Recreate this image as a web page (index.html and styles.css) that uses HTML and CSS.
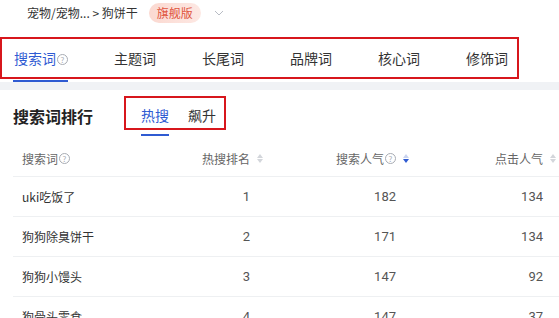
FILE: index.html
```html
<!DOCTYPE html>
<html lang="zh-CN">
  <head>
    <meta charset="UTF-8" />
    <title>搜索词排行</title>
    <link rel="stylesheet" href="styles.css">
  </head>
  <body>
    <div class="crumbs">
      <span class="crumb-text">宠物/宠物... &gt; 狗饼干</span>
      <span class="badge">旗舰版</span>
      <svg class="chevron" width="10" height="6" viewBox="0 0 10 6"><path d="M1 1l4 4 4-4" fill="none" stroke="#b8bcc4" stroke-width="1"/></svg>
    </div>

    <div class="tabbar">
      <div class="tabs">
        <div class="tab active">搜索词<span class="help">?</span></div>
        <div class="tab">主题词</div>
        <div class="tab">长尾词</div>
        <div class="tab">品牌词</div>
        <div class="tab">核心词</div>
        <div class="tab">修饰词</div>
      </div>
    </div>
    <div class="band"></div>

    <div class="rank-head">
      <div class="rank-title">搜索词排行</div>
      <div class="subtabs">
        <div class="subtab active">热搜</div>
        <div class="subtab">飙升</div>
      </div>
    </div>

    <div class="table">
      <div class="row head">
        <div class="cell name">搜索词<span class="help">?</span></div>
        <div class="cell num">热搜排名<span class="sorter"><i class="up"></i><i class="down"></i></span></div>
        <div class="cell num">搜索人气<span class="help">?</span><span class="sorter on"><i class="up"></i><i class="down"></i></span></div>
        <div class="cell num">点击人气<span class="sorter"><i class="up"></i><i class="down"></i></span></div>
      </div>
      <div class="row">
        <div class="cell name">uki吃饭了</div>
        <div class="cell num">1</div>
        <div class="cell num">182</div>
        <div class="cell num">134</div>
      </div>
      <div class="row">
        <div class="cell name">狗狗除臭饼干</div>
        <div class="cell num">2</div>
        <div class="cell num">171</div>
        <div class="cell num">134</div>
      </div>
      <div class="row">
        <div class="cell name">狗狗小馒头</div>
        <div class="cell num">3</div>
        <div class="cell num">147</div>
        <div class="cell num">92</div>
      </div>
      <div class="row">
        <div class="cell name">狗骨头零食</div>
        <div class="cell num">4</div>
        <div class="cell num">147</div>
        <div class="cell num">37</div>
      </div>
    </div>
  </body>
</html>
```

FILE: styles.css
```css
body {
  margin: 0;
  background: #fff;
  color: #333;
  font-family: "Noto Sans CJK SC", "Noto Sans", sans-serif;
  overflow: hidden;
}

/* breadcrumb */
.crumbs {
  display: flex;
  align-items: center;
  height: 25px;
  padding-left: 27px;
  font-size: 12px;
}

.badge {
  margin-left: 11px;
  padding: 0 8px;
  height: 20px;
  line-height: 20px;
  border-radius: 10px;
  background: linear-gradient(90deg, #fbd9d1, #fde8e3);
  color: #e0553d;
  font-size: 12px;
}

.chevron {
  margin-left: 13px;
}

/* main tabs */
.tabbar {
  margin-top: 12px;
  padding-bottom: 3px;
}

.tabs {
  display: flex;
  width: 503px;
  height: 38px;
  padding-left: 12px;
  gap: 46px;
  border: 2px solid #d7161c;
}

.tab {
  position: relative;
  line-height: 38px;
  font-size: 14px;
  color: #333;
}

.tab.active {
  color: #2f5bd2;
}

.tab.active::after {
  content: "";
  position: absolute;
  left: -1px;
  right: 0;
  bottom: -5px;
  height: 2px;
  background: #2f5bd2;
}

.help {
  display: inline-block;
  width: 9px;
  height: 9px;
  margin-left: 1px;
  border: 1px solid #a8acb3;
  border-radius: 50%;
  font-size: 8px;
  line-height: 9px;
  text-align: center;
  color: #a8acb3;
  vertical-align: 1px;
}

.band {
  height: 8px;
  background: #f0f2f5;
}

/* ranking header */
.rank-head {
  display: flex;
  height: 50px;
  padding-left: 13px;
}

.rank-title {
  align-self: center;
  margin-top: 2px;
  font-size: 16px;
  font-weight: 700;
  color: #222;
}

.subtabs {
  display: flex;
  align-self: flex-start;
  gap: 19px;
  margin-top: 6px;
  margin-left: 31px;
  height: 30px;
  padding: 0 8px 0 15px;
  border: 2px solid #d7161c;
}

.subtab {
  position: relative;
  padding-top: 4px;
  line-height: 26px;
  font-size: 14px;
  color: #333;
}

.subtab.active {
  color: #2f5bd2;
}

.subtab.active::after {
  content: "";
  position: absolute;
  left: 0;
  right: 0;
  bottom: -8px;
  height: 2px;
  background: #2f5bd2;
}

/* table */
.table {
  margin-left: 13px;
}

.row {
  display: grid;
  grid-template-columns: 137px 116px 146px 1fr;
  height: 39px;
  border-bottom: 1px solid #eef0f2;
  font-size: 12px;
}

.row.head {
  height: 36px;
  color: #666;
}

.cell {
  display: flex;
  align-items: center;
}

.cell.name {
  padding-left: 9px;
}

.cell.num {
  justify-content: flex-end;
  padding-right: 16px;
  font-family: Roboto, "Noto Sans CJK SC", sans-serif;
  font-size: 13px;
  color: #555;
}

.head .cell.num {
  padding-right: 3px;
  font-family: "Noto Sans CJK SC", sans-serif;
  font-size: 12px;
  color: #666;
}

.sorter {
  display: flex;
  flex-direction: column;
  gap: 1px;
  margin-left: 7px;
}

.sorter i {
  width: 0;
  height: 0;
  border-left: 3px solid transparent;
  border-right: 3px solid transparent;
}

.sorter .up {
  border-bottom: 4px solid #d3d6db;
}

.sorter .down {
  border-top: 4px solid #d3d6db;
}

.sorter.on .up {
  border-bottom-color: #c9d3ef;
}

.sorter.on .down {
  border-top-color: #2f5bd2;
}
```
